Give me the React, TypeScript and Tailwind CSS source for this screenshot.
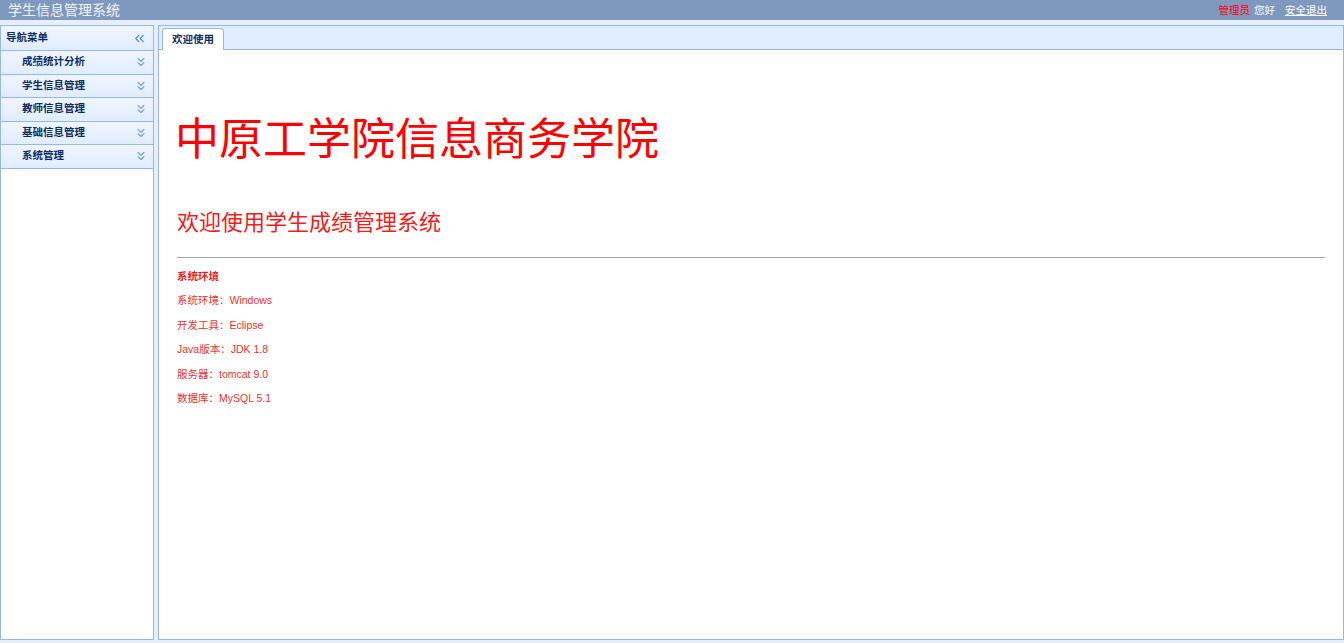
import { ChevronsLeft, ChevronsDown } from "lucide-react";

const menus = ["成绩统计分析", "学生信息管理", "教师信息管理", "基础信息管理", "系统管理"];

const envs = [
  "系统环境：Windows",
  "开发工具：Eclipse",
  "Java版本：JDK 1.8",
  "服务器：tomcat 9.0",
  "数据库：MySQL 5.1",
];

export default function App() {
  return (
    <div
      className="w-[1344px] h-[643px] flex flex-col bg-[#e6eefa] overflow-hidden"
      style={{ fontFamily: '"Liberation Sans", "Noto Sans CJK SC", sans-serif' }}
    >
      {/* top bar */}
      <div className="h-[20px] bg-[#7f99be] flex items-center justify-between pl-2 pr-[17px] shrink-0">
        <span className="text-[14px] leading-none text-[#f1f4fa]">学生信息管理系统</span>
        <div className="flex items-center text-[10.5px] leading-none">
          <span className="text-[#ff0000]">管理员</span>
          <span className="text-white ml-[4px]">您好</span>
          <span className="text-white underline ml-[10px]">安全退出</span>
        </div>
      </div>

      <div className="flex-1 flex gap-[4px] pt-[5px] pb-[3px]">
        {/* sidebar */}
        <div className="w-[154px] border border-[#95b8e7] bg-white flex flex-col">
          <div className="h-[25px] flex items-center justify-between pl-[5px] pr-[6px] bg-gradient-to-b from-[#eff5ff] to-[#e0ecff] border-b border-[#95b8e7]">
            <span className="text-[10.5px] font-bold text-[#0e2d5f]">导航菜单</span>
            <ChevronsLeft size={15} strokeWidth={1.8} className="text-[#4a84d0]" />
          </div>
          {menus.map((m) => (
            <div
              key={m}
              className="h-[23.5px] flex items-center justify-between pl-[21px] pr-[5px] bg-gradient-to-b from-[#eff5ff] to-[#e0ecff] border-b border-[#95b8e7]"
            >
              <span className="text-[10.5px] font-bold text-[#0e2d5f]">{m}</span>
              <ChevronsDown size={14} strokeWidth={2} className="text-[#6d9fd8]" />
            </div>
          ))}
        </div>

        {/* main */}
        <div className="flex-1 border border-[#95b8e7] bg-white flex flex-col">
          <div className="h-[24px] bg-[#e0ecff] border-b border-[#95b8e7] flex items-end pl-[3px]">
            <div className="h-[22px] w-[62px] -mb-px bg-white border border-b-0 border-[#95b8e7] rounded-t-[4px] flex items-center justify-center text-[10.5px] font-bold text-[#0e2d5f]">
              欢迎使用
            </div>
          </div>
          <div className="flex-1 pl-[18px] pr-[18px] pt-[64px]">
            <h1 className="text-[44px] leading-[52px] text-[#ff0000] -ml-[2px]">中原工学院信息商务学院</h1>
            <h2 className="mt-[42px] text-[22px] leading-[30px] text-[#f21c1c]">欢迎使用学生成绩管理系统</h2>
            <hr className="mt-[19px] border-t border-[#a0a0a0]" />
            <div className="mt-[10px] text-[10.5px] font-bold text-[#ee2020] leading-[16px]">系统环境</div>
            <div className="flex flex-col gap-[8.5px] mt-[8px]">
              {envs.map((e) => (
                <div key={e} className="text-[10.5px] leading-[16px] text-[#f03030]">
                  {e}
                </div>
              ))}
            </div>
          </div>
        </div>
      </div>
    </div>
  );
}
